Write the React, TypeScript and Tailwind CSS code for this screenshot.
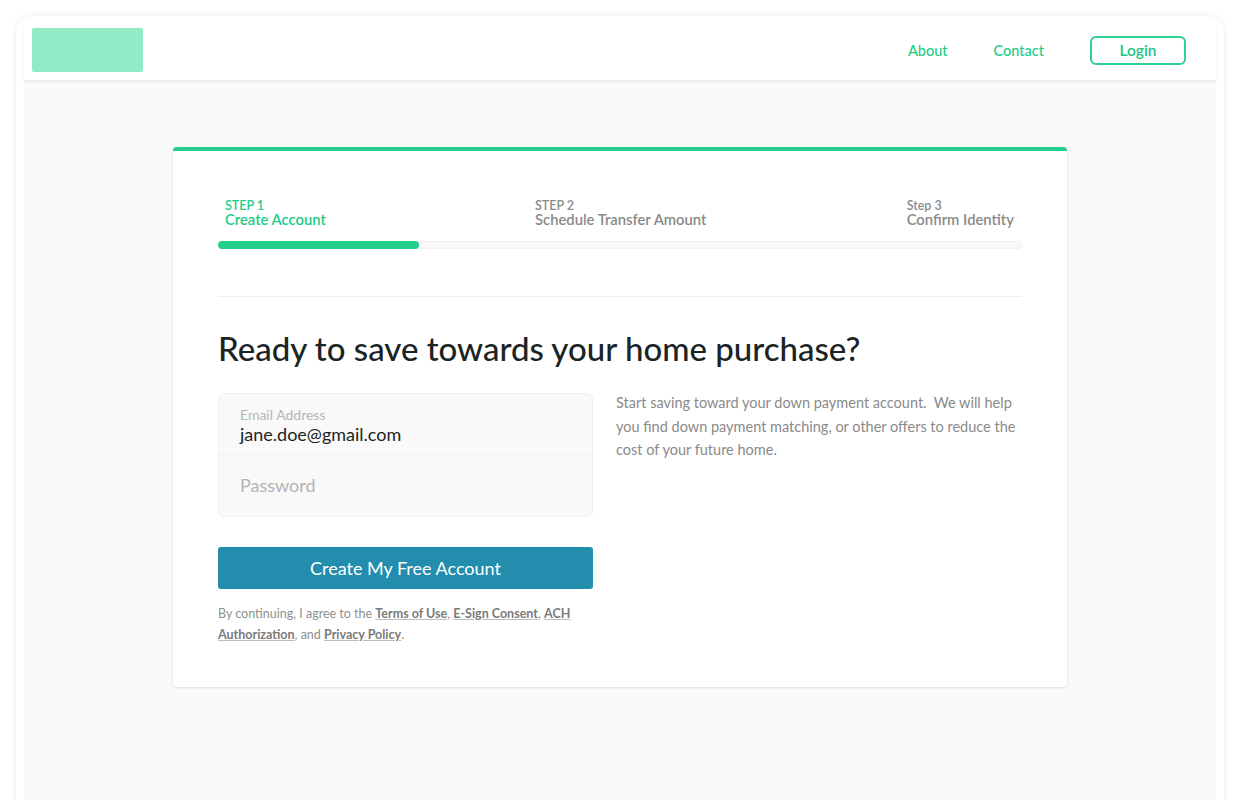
import React from "react";

export default function App() {
  const head = { fontFamily: "Lato, 'Noto Sans', sans-serif" };
  const body = { fontFamily: "Lato, 'Open Sans', sans-serif" };
  return (
    <div className="min-h-[800px] bg-white pt-4 px-4 overflow-hidden" style={head}>
      <div className="rounded-t-2xl bg-white px-2 shadow-[0_0_6px_rgba(40,40,90,0.10)] h-[800px] flex flex-col">
        <header className="h-16 flex items-start justify-between pl-2 pr-[30px] pt-3 relative z-10 shadow-[0_2px_3px_rgba(0,0,0,0.07)]">
          <div className="w-[111px] h-[44px] bg-[#90ebc6] rounded-[2px]" />
          <nav className="flex items-center gap-[46px] mt-2 text-[14.5px] text-[#22cc88]">
            <a className="font-medium">About</a>
            <a className="font-medium">Contact</a>
            <button className="w-[96px] h-[29px] rounded-md border-2 border-[#2ed18f] font-semibold text-[15.5px] text-[#22c586] leading-none">
              Login
            </button>
          </nav>
        </header>
        <main className="flex-1 bg-[#fafafa] flex justify-center pt-[67px]">
          <div className="w-[894px] h-[540px] bg-white rounded border-t-4 border-[#25cf8c] shadow-[0_1px_3px_rgba(0,0,0,0.12)] px-[45px] pt-[48px]">
            <div className="flex">
              <div className="w-[317px] pl-[7px]">
                <div className="text-[12.5px] leading-[13px] font-semibold text-[#22cc88]">STEP 1</div>
                <div className="text-[14.8px] leading-[15px] font-semibold text-[#22cc88]">Create Account</div>
              </div>
              <div className="flex-1">
                <div className="text-[12.5px] leading-[13px] font-semibold text-[#8a8a8a]">STEP 2</div>
                <div className="text-[14.8px] leading-[15px] font-semibold text-[#8a8a8a]">Schedule Transfer Amount</div>
              </div>
              <div className="pr-2">
                <div className="text-[12.5px] leading-[13px] font-semibold text-[#8a8a8a]">Step 3</div>
                <div className="text-[14.8px] leading-[15px] font-semibold text-[#8a8a8a]">Confirm Identity</div>
              </div>
            </div>
            <div className="mt-[14px] h-2 rounded-full bg-[#f8f8f8] border border-[#f1f1f1] relative">
              <div className="absolute -left-px -top-px h-2 w-[201px] rounded-full bg-[#25cf8c]" />
            </div>
            <div className="mt-[47px] h-px bg-[#efefef]" />
            <h1 className="mt-[31px] text-[33px] leading-[40px] font-medium text-[#1b2424]">
              Ready to save towards your home purchase?
            </h1>
            <div className="mt-[25px] flex gap-[23px]">
              <div className="w-[375px]">
                <div className="rounded-md border border-[#f0f0f0] bg-[#f9f9f9]">
                  <div className="h-[61px] px-[21px] pt-[13px] border-b border-[#efefef]">
                    <div className="text-[14px] leading-[16px] text-[#b5b5b5]">Email Address</div>
                    <div className="text-[18px] leading-[22px] text-[#1d2424]">jane.doe@gmail.com</div>
                  </div>
                  <div className="h-[61px] px-[21px] flex items-center text-[18px] text-[#b3b3b3]">Password</div>
                </div>
                <button className="mt-[30px] w-full h-[42px] rounded-[3px] bg-[#228dad] text-white text-[18px]">
                  Create My Free Account
                </button>
                <p className="mt-[14px] w-full text-[12.5px] leading-[21px] text-[#8f8f8f]" style={body}>
                  By continuing, I agree to the{" "}
                  <a className="font-bold text-[#7a7a7a] underline decoration-[#bdbdbd]">Terms of Use</a>,{" "}
                  <a className="font-bold text-[#7a7a7a] underline decoration-[#bdbdbd]">E-Sign Consent</a>,{" "}
                  <a className="font-bold text-[#7a7a7a] underline decoration-[#bdbdbd]">ACH Authorization</a>, and{" "}
                  <a className="font-bold text-[#7a7a7a] underline decoration-[#bdbdbd]">Privacy Policy</a>.
                </p>
              </div>
              <p className="w-[400px] -mt-[2px] text-[14.5px] leading-[23.5px] text-[#8a8a8a]" style={body}>
                Start saving toward your down payment account.&nbsp; We will help you find down payment matching, or other offers to reduce the cost of your future home.
              </p>
            </div>
          </div>
        </main>
      </div>
    </div>
  );
}
